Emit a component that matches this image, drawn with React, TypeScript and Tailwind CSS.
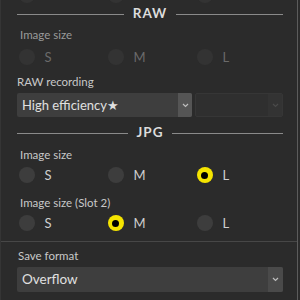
import React from 'react';

type Opt = { label: string; checked?: boolean };

const Radio: React.FC<{ label: string; checked?: boolean; disabled?: boolean }> = ({ label, checked, disabled }) => (
  <div className="flex items-center gap-[10px] pl-[1.5px]">
    {checked ? (
      <span className="w-4 h-4 rounded-full bg-[#f5e400] flex items-center justify-center">
        <span className="w-[7px] h-[7px] rounded-full bg-black" />
      </span>
    ) : (
      <span className={`w-4 h-4 rounded-full ${disabled ? 'bg-[#333333]' : 'bg-[#3d3d3d]'}`} />
    )}
    <span className={`text-[13px] leading-none ${disabled ? 'text-[#6a6a6a]' : 'text-[#cfcfcf]'}`}>{label}</span>
  </div>
);

const RadioRow: React.FC<{ opts: Opt[]; disabled?: boolean }> = ({ opts, disabled }) => (
  <div className="grid grid-cols-[89px_89px_1fr] h-4">
    {opts.map((o) => (
      <Radio key={o.label} label={o.label} checked={o.checked} disabled={disabled} />
    ))}
  </div>
);

const Divider: React.FC<{ title: string }> = ({ title }) => (
  <div className="flex items-center gap-[9px] h-4">
    <div className="flex-1 h-px bg-[#8a8a8a]" />
    <span className="text-[13.5px] font-bold tracking-[1px] text-[#dcdcdc] leading-none">{title}</span>
    <div className="flex-1 h-px bg-[#8a8a8a]" />
  </div>
);

const Chevron: React.FC<{ dim?: boolean }> = ({ dim }) => (
  <svg width="7" height="5" viewBox="0 0 7 5" className={dim ? 'text-[#4a4a4a]' : 'text-[#bdbdbd]'}>
    <path d="M1 1l2.5 2.5L6 1" fill="none" stroke="currentColor" strokeWidth="1.2" />
  </svg>
);

export default function App() {
  const sml = (c?: string): Opt[] => [
    { label: 'S', checked: c === 'S' },
    { label: 'M', checked: c === 'M' },
    { label: 'L', checked: c === 'L' },
  ];

  return (
    <div
      className="w-[300px] h-[300px] overflow-hidden bg-[#2b2b2b] flex"
      style={{ fontFamily: 'Lato, "Open Sans", sans-serif' }}
    >
      <div className="w-[298px] h-full border-l border-[#353535] border-r border-r-[#5c5c5c] flex flex-col">
        {/* row cut off above */}
        <div className="pl-[16px] pr-[14px] -mt-[13px] grid grid-cols-[89px_89px_1fr] h-4">
          <span className="ml-[1.5px] w-4 h-4 rounded-full bg-[#333333]" />
          <span className="ml-[1.5px] w-4 h-4 rounded-full bg-[#333333]" />
          <span className="ml-[1.5px] w-4 h-4 rounded-full bg-[#333333]" />
        </div>

        <div className="pl-[16px] pr-[14px] mt-[3px]">
          <Divider title="RAW" />
        </div>

        <div className="pl-[16px] pr-[14px] mt-[5px] flex flex-col">
          <span className="text-[11.5px] text-[#9a9a9a] leading-[16px] pl-[3px]">Image size</span>
          <div className="mt-[6px]">
            <RadioRow opts={sml()} disabled />
          </div>
          <span className="text-[11.5px] text-[#c8c8c8] leading-[16px] mt-[9px]">RAW recording</span>
          <div className="mt-[3px] flex gap-[3px] h-[24px]">
            <div className="w-[175px] flex bg-[#3e3e3e] rounded-[2px] overflow-hidden">
              <span className="flex-1 text-[13px] text-[#e0e0e0] leading-[24px] pl-[5px]">High efficiency★</span>
              <span className="w-[14px] bg-[#555555] flex items-center justify-center">
                <Chevron />
              </span>
            </div>
            <div className="flex-1 flex bg-[#2f2f2f] border border-[#363636] rounded-[2px] overflow-hidden">
              <span className="flex-1" />
              <span className="w-[14px] bg-[#333333] flex items-center justify-center">
                <Chevron dim />
              </span>
            </div>
          </div>
        </div>

        <div className="pl-[16px] pr-[14px] mt-[8px]">
          <Divider title="JPG" />
        </div>

        <div className="pl-[16px] pr-[14px] mt-[6px] flex flex-col">
          <span className="text-[11.5px] text-[#c8c8c8] leading-[16px] pl-[3px]">Image size</span>
          <div className="mt-[4px]">
            <RadioRow opts={sml('L')} />
          </div>
          <span className="text-[11.5px] text-[#c8c8c8] leading-[16px] mt-[12px] pl-[3px]">Image size (Slot 2)</span>
          <div className="mt-[4px]">
            <RadioRow opts={sml('M')} />
          </div>
        </div>

        <div className="h-px bg-[#474747] mt-[10px]" />

        <div className="pl-[16px] pr-[14px] mt-[6px] flex flex-col">
          <span className="text-[11.5px] text-[#c8c8c8] leading-[16px] pl-[1px]">Save format</span>
          <div className="mt-[3px] h-[25px] flex bg-[#3e3e3e] rounded-[2px] overflow-hidden">
            <span className="flex-1 text-[13.5px] text-[#e0e0e0] leading-[25px] pl-[5px]">Overflow</span>
            <span className="w-[15px] bg-[#4a4a4a] flex items-center justify-center">
              <Chevron />
            </span>
          </div>
        </div>
      </div>
    </div>
  );
}
